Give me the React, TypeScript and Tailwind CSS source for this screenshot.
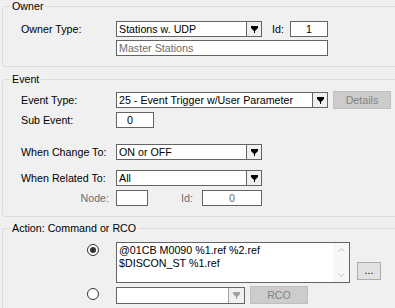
import React from 'react';

const Arrow = ({ disabled }: { disabled?: boolean }) => (
    <svg width="7" height="7" viewBox="0 0 7 7" className={disabled ? 'text-[#a0a0a0]' : 'text-black'}>
        <path d="M0 0h7v2L4 5v2H3V5L0 2z" fill="currentColor" />
    </svg>
);

const Combo = ({ text, className }: { text: string; className: string }) => (
    <div className={`flex h-[16px] border border-[#646464] bg-white ${className}`}>
        <div className="flex-1 pl-[2px] leading-[14px] whitespace-nowrap overflow-hidden">{text}</div>
        <div className="w-[15px] border-l border-[#646464] bg-[#f0f0f0] flex items-center justify-center">
            <Arrow />
        </div>
    </div>
);

const Group = ({ title, className, children }: { title: string; className: string; children: React.ReactNode }) => (
    <fieldset className={`w-[410px] border border-[#dcdcdc] rounded-[3px] ${className}`}>
        <legend className="ml-[7px] px-[2px] leading-[13px]">{title}</legend>
        {children}
    </fieldset>
);

const Radio = ({ checked }: { checked?: boolean }) => (
    <div className="w-[12px] h-[12px] rounded-full border border-[#333333] bg-white flex items-center justify-center">
        {checked && <div className="w-[6px] h-[6px] rounded-full bg-[#333333]" />}
    </div>
);

export default function App() {
    return (
        <div className="w-[395px] h-[308px] overflow-hidden bg-[#f0f0f0] pl-[2px] font-['Liberation_Sans',sans-serif] text-[10.7px] leading-[14px] text-black">
            <Group title="Owner" className="h-[67px]">
                <div className="pl-[18px] pt-[8px]">
                    <div className="flex items-center">
                        <div className="w-[95px]">Owner Type:</div>
                        <Combo text="Stations w. UDP" className="w-[146px]" />
                        <div className="ml-[10px] w-[18px]">Id:</div>
                        <div className="w-[38px] h-[16px] border border-[#646464] bg-white text-center leading-[14px]">1</div>
                    </div>
                    <div className="mt-[3px] ml-[95px] w-[212px] h-[16px] border border-[#646464] bg-white pl-[2px] leading-[14px] text-[#6d6d6d]">
                        Master Stations
                    </div>
                </div>
            </Group>

            <Group title="Event" className="mt-[6px] h-[144px]">
                <div className="pl-[18px] pt-[5px]">
                    <div className="flex items-center">
                        <div className="w-[95px]">Event Type:</div>
                        <Combo text="25 - Event Trigger w/User Parameter" className="w-[212px]" />
                        <div className="ml-[5px] w-[58px] h-[18px] border border-[#bfbfbf] bg-[#cccccc] text-[#838383] text-center leading-[16px]">
                            Details
                        </div>
                    </div>
                    <div className="flex items-center mt-[3px]">
                        <div className="w-[95px]">Sub Event:</div>
                        <div className="w-[38px] h-[16px] border border-[#646464] bg-white pl-[10px] leading-[14px]">0</div>
                    </div>
                    <div className="flex items-center mt-[16px]">
                        <div className="w-[95px]">When Change To:</div>
                        <Combo text="ON or OFF" className="w-[146px]" />
                    </div>
                    <div className="flex items-center mt-[10px]">
                        <div className="w-[95px]">When Related To:</div>
                        <Combo text="All" className="w-[146px]" />
                    </div>
                    <div className="flex items-center mt-[4px] text-[#6d6d6d]">
                        <div className="w-[95px] pr-[7px] text-right">Node:</div>
                        <div className="w-[32px] h-[16px] border border-[#646464] bg-white" />
                        <div className="w-[54px] pr-[9px] text-right">Id:</div>
                        <div className="w-[60px] h-[16px] border border-[#646464] bg-white text-center leading-[14px]">0</div>
                    </div>
                </div>
            </Group>

            <Group title="Action: Command or RCO" className="mt-[5px] h-[150px]">
                <div className="pt-[7px]">
                    <div className="flex items-start">
                        <div className="w-[113px] pl-[84px] pt-[2px]">
                            <Radio checked />
                        </div>
                        <div className="flex w-[234px] h-[41px] border border-[#646464] bg-white">
                            <div className="flex-1 pl-[2px] pt-[1px] leading-[13px] whitespace-nowrap">
                                <div>@01CB M0090 %1.ref %2.ref</div>
                                <div>$DISCON_ST %1.ref</div>
                            </div>
                            <div className="w-[16px] bg-[#f7f7f7] flex flex-col items-center justify-between py-[5px] text-[#c0c0c0]">
                                <svg width="7" height="4" viewBox="0 0 7 4">
                                    <path d="M0.5 3.5L3.5 0.5L6.5 3.5" stroke="currentColor" fill="none" />
                                </svg>
                                <svg width="7" height="4" viewBox="0 0 7 4">
                                    <path d="M0.5 0.5L3.5 3.5L6.5 0.5" stroke="currentColor" fill="none" />
                                </svg>
                            </div>
                        </div>
                        <div className="ml-[7px] mt-[20px] w-[24px] h-[18px] border border-[#adadad] bg-[#e1e1e1] text-center leading-[14px]">
                            ...
                        </div>
                    </div>
                    <div className="flex items-start mt-[3px]">
                        <div className="w-[113px] pl-[84px] pt-[2px]">
                            <Radio />
                        </div>
                        <div className="flex mt-[1px] w-[129px] h-[17px] border border-[#646464] bg-white">
                            <div className="flex-1" />
                            <div className="w-[16px] border-l border-[#a0a0a0] bg-[#f0f0f0] flex items-center justify-center">
                                <Arrow disabled />
                            </div>
                        </div>
                        <div className="ml-[5px] w-[58px] h-[18px] border border-[#bfbfbf] bg-[#cccccc] text-[#838383] text-center leading-[16px]">
                            RCO
                        </div>
                    </div>
                </div>
            </Group>
        </div>
    );
}
